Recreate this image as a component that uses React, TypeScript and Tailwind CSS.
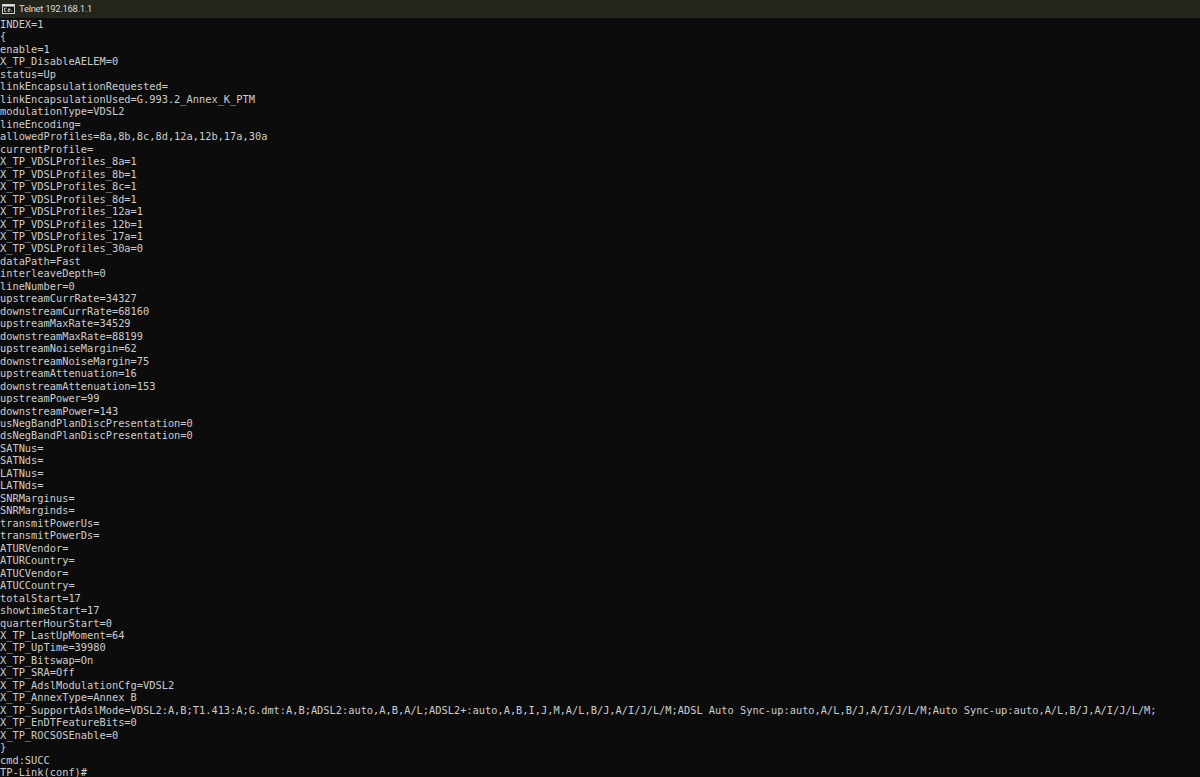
const lines = `INDEX=1
{
enable=1
X_TP_DisableAELEM=0
status=Up
linkEncapsulationRequested=
linkEncapsulationUsed=G.993.2_Annex_K_PTM
modulationType=VDSL2
lineEncoding=
allowedProfiles=8a,8b,8c,8d,12a,12b,17a,30a
currentProfile=
X_TP_VDSLProfiles_8a=1
X_TP_VDSLProfiles_8b=1
X_TP_VDSLProfiles_8c=1
X_TP_VDSLProfiles_8d=1
X_TP_VDSLProfiles_12a=1
X_TP_VDSLProfiles_12b=1
X_TP_VDSLProfiles_17a=1
X_TP_VDSLProfiles_30a=0
dataPath=Fast
interleaveDepth=0
lineNumber=0
upstreamCurrRate=34327
downstreamCurrRate=68160
upstreamMaxRate=34529
downstreamMaxRate=88199
upstreamNoiseMargin=62
downstreamNoiseMargin=75
upstreamAttenuation=16
downstreamAttenuation=153
upstreamPower=99
downstreamPower=143
usNegBandPlanDiscPresentation=0
dsNegBandPlanDiscPresentation=0
SATNus=
SATNds=
LATNus=
LATNds=
SNRMarginus=
SNRMarginds=
transmitPowerUs=
transmitPowerDs=
ATURVendor=
ATURCountry=
ATUCVendor=
ATUCCountry=
totalStart=17
showtimeStart=17
quarterHourStart=0
X_TP_LastUpMoment=64
X_TP_UpTime=39980
X_TP_Bitswap=On
X_TP_SRA=Off
X_TP_AdslModulationCfg=VDSL2
X_TP_AnnexType=Annex B
X_TP_SupportAdslMode=VDSL2:A,B;T1.413:A;G.dmt:A,B;ADSL2:auto,A,B,A/L;ADSL2+:auto,A,B,I,J,M,A/L,B/J,A/I/J/L/M;ADSL Auto Sync-up:auto,A/L,B/J,A/I/J/L/M;Auto Sync-up:auto,A/L,B/J,A/I/J/L/M;
X_TP_EnDTFeatureBits=0
X_TP_ROCSOSEnable=0
}
cmd:SUCC
TP-Link(conf)#`.split('\n');

function ConsoleIcon() {
  return (
    <svg width="13" height="10" viewBox="0 0 13 10" className="shrink-0">
      <rect x="0.5" y="0.5" width="12" height="9" fill="#141414" stroke="#cfcfcf" />
      <rect x="1" y="1" width="11" height="1.5" fill="#e8e8e8" />
      <path d="M4.5 4.2H2.5V7.3H4.5M6 5H8.2V5.8H6V7.3H8.2" fill="none" stroke="#f0f0f0" strokeWidth="0.8" />
      <rect x="9.4" y="6.6" width="0.9" height="0.9" fill="#f0f0f0" />
    </svg>
  );
}

export default function App() {
  return (
    <div className="w-[1200px] h-[777px] overflow-hidden bg-[#0c0c0c] flex flex-col">
      <div className="h-[18px] shrink-0 bg-[#23241c] flex items-center gap-[4px] pl-[2px]">
        <ConsoleIcon />
        <span className="text-[9.5px] tracking-[-0.3px] leading-none text-[#d8d8d4] font-['Roboto',sans-serif]">Telnet 192.168.1.1</span>
      </div>
      <div className="whitespace-pre text-[#cccccc] text-[10.33px] leading-[12.47px] font-['DejaVu_Sans_Mono',monospace]">
        {lines.map((line, i) => (
          <div key={i}>{line}</div>
        ))}
      </div>
    </div>
  );
}
